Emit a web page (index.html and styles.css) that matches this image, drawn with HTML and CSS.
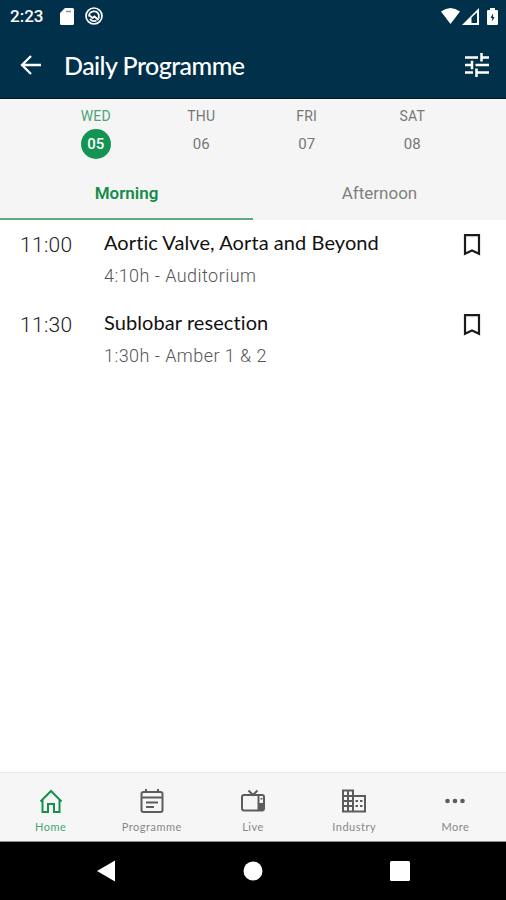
FILE: index.html
```
<!DOCTYPE html>
<html lang="en">
<head>
  <meta charset="UTF-8" />
  <meta name="viewport" content="width=device-width, initial-scale=1.0"/>
  <title>Daily Programme</title>
  <link rel="stylesheet" href="styles.css">
</head>
<body>
  <div class="status-bar">
    <span class="clock">2:23</span>
    <svg class="sd" width="14" height="17" viewBox="0 0 14 17"><path fill="#fff" d="M5 0h7.500a1.500 1.500 0 0 1 1.500 1.500v14a1.500 1.500 0 0 1-1.500 1.500h-11A1.500 1.500 0 0 1 0 15.500V5z"/><path stroke="#8295a2" stroke-width="1.500" d="M6 3.500h5"/></svg>
    <svg class="sync" width="18" height="18" viewBox="0 0 18 18" fill="none" stroke="#fff"><circle cx="9" cy="9" r="8" stroke-width="1.700"/><path stroke-width="1.800" d="M4 9.500a5 5 0 0 1 9.800-1.500v3.500M4.500 8.500l3 2.500 2-1.500 4 3.500M5 12a5 5 0 0 0 6.500 1.500"/></svg>
    <div class="signals">
      <svg width="19" height="16" viewBox="0 0 19 16"><path fill="#fff" d="M0 3.500Q9.500-3.500 19 3.500L9.500 16z"/></svg>
      <svg width="17" height="17" viewBox="0 0 17 17"><path fill="#fff" fill-rule="evenodd" d="M0 17L17 0v17zM9.500 9.500V15H15V4.500z"/></svg>
      <svg class="battery" width="11" height="17" viewBox="0 0 11 17"><path fill="#fff" d="M3 0h5v2h2a1 1 0 0 1 1 1v13a1 1 0 0 1-1 1H1a1 1 0 0 1-1-1V3a1 1 0 0 1 1-1h2z"/><path fill="#01304a" d="M6 5.500L3.500 10h1.700v3.500L7.500 9H6z"/></svg>
    </div>
  </div>

  <header class="app-bar">
    <svg width="22" height="20" viewBox="0 0 22 20" fill="none" stroke="#fff" stroke-width="2.300"><path d="M21 10H2M11 1L2 10l9 9"/></svg>
    <h1>Daily Programme</h1>
    <svg class="filter" width="24" height="24" viewBox="0 0 24 24" fill="none" stroke="#fff" stroke-width="2.500"><path d="M0 4.500h13M16.500 4.500H24M16.500 0v8.500M0 12h7M10.500 12H24M7 7.700v8.600M0 19.500h8M11.500 19.500H24M11.500 15.500V24"/></svg>
  </header>

  <div class="days">
    <div class="day active"><span>WED</span><b>05</b></div>
    <div class="day"><span>THU</span><b>06</b></div>
    <div class="day"><span>FRI</span><b>07</b></div>
    <div class="day"><span>SAT</span><b>08</b></div>
  </div>

  <div class="tabs">
    <div class="tab selected">Morning</div>
    <div class="tab">Afternoon</div>
  </div>

  <main class="sessions">
    <div class="session">
      <div class="time">11:00</div>
      <div class="info">
        <h2>Aortic Valve, Aorta and Beyond</h2>
        <p>4:10h - Auditorium</p>
      </div>
      <svg class="bookmark" width="18" height="22" viewBox="0 0 18 22"><path d="M2 1.200h14v18.500l-7-3.200-7 3.200z"/></svg>
    </div>
    <div class="session">
      <div class="time">11:30</div>
      <div class="info">
        <h2>Sublobar resection</h2>
        <p>1:30h - Amber 1 &amp; 2</p>
      </div>
      <svg class="bookmark" width="18" height="22" viewBox="0 0 18 22"><path d="M2 1.200h14v18.500l-7-3.200-7 3.200z"/></svg>
    </div>
  </main>

  <nav class="bottom-nav">
    <div class="item current">
      <svg width="26" height="26" viewBox="0 0 26 26"><path d="M2.500 13.500L13 3l10.500 10.500M4.500 11.500V24h5.500v-8h6v8h5.500V11.500"/></svg>
      <span>Home</span>
    </div>
    <div class="item">
      <svg width="26" height="26" viewBox="0 0 26 26"><rect x="2.500" y="4" width="21" height="20" rx="2"/><path d="M2.500 9.500h21M7 1v3M19 1v3M7 14.500h12M7 19h8"/></svg>
      <span>Programme</span>
    </div>
    <div class="item">
      <svg width="26" height="26" viewBox="0 0 26 26"><rect x="2" y="7" width="22" height="15.500" rx="2"/><path d="M18.500 7v15.500M8.500 2.500l4.500 4.500 4.500-4.500"/><path class="speaker" d="M19 15h5v7h-5zM20.500 10h2v1.500h-2z"/></svg>
      <span>Live</span>
    </div>
    <div class="item">
      <svg width="26" height="26" viewBox="0 0 26 26"><path d="M12 23.500H2v-21h10v21h12V8H12M7 2.500v21M2 8h10M2 13h10M2 18h10"/><path stroke-dasharray="2.500 2" d="M14.500 13H22M14.500 18H22"/></svg>
      <span>Industry</span>
    </div>
    <div class="item">
      <svg width="26" height="26" viewBox="0 0 26 26"><g class="dots"><circle cx="5.500" cy="13" r="2.300"/><circle cx="13" cy="13" r="2.300"/><circle cx="20.500" cy="13" r="2.300"/></g></svg>
      <span>More</span>
    </div>
  </nav>

  <div class="system-nav">
    <svg width="20" height="22" viewBox="0 0 20 22"><path fill="#fff" d="M19 .5v21L1 11z"/></svg>
    <svg width="20" height="20" viewBox="0 0 20 20"><circle cx="10" cy="10" r="9.500" fill="#fff"/></svg>
    <svg width="20" height="20" viewBox="0 0 20 20"><rect width="20" height="20" rx="1.500" fill="#fff"/></svg>
  </div>
</body>
</html>
```

FILE: styles.css
```
* {
  box-sizing: border-box;
}

body {
  margin: 0;
  height: 900px;
  display: flex;
  flex-direction: column;
  font-family: Roboto, sans-serif;
  background: #fff;
  overflow: hidden;
}

svg {
  display: block;
  flex: none;
}

h1, h2, p {
  margin: 0;
  font-weight: normal;
  white-space: nowrap;
}

.status-bar {
  height: 32px;
  padding: 0 8px 0 10px;
  display: flex;
  align-items: center;
  background: #01304a;
  color: #fff;
}

.clock {
  width: 50px;
  font-size: 17px;
  font-weight: 500;
}

.sync {
  margin-left: 11px;
}

.signals {
  display: flex;
  align-items: center;
  gap: 2px;
  margin-left: auto;
}

.battery {
  margin-left: 6px;
}

.app-bar {
  height: 67px;
  padding: 0 17px 1px 20px;
  display: flex;
  align-items: center;
  background: #01304a;
  border-bottom: 1px solid #06151f;
}

.app-bar h1 {
  margin-left: 22px;
  color: #fff;
  font-family: Lato, sans-serif;
  font-size: 25px;
  font-weight: 500;
  letter-spacing: -0.55px;
}

.filter {
  margin-left: auto;
}

.days {
  height: 69px;
  padding: 8px 41px 0 43px;
  display: grid;
  grid-template-columns: repeat(4, 1fr);
  background: #f5f5f5;
  color: #777;
}

.day {
  display: flex;
  flex-direction: column;
  align-items: center;
  font-size: 14px;
  line-height: 18px;
}

.day span {
  letter-spacing: 0.2px;
}

.day b {
  width: 30px;
  height: 30px;
  margin-top: 4px;
  border-radius: 50%;
  line-height: 30px;
  text-align: center;
  font-size: 15px;
  font-weight: normal;
}

.day.active {
  color: #4ea477;
}

.day.active b {
  background: #149354;
  color: #fff;
  font-weight: 500;
}

.tabs {
  height: 52px;
  display: flex;
  background: #f5f5f5;
}

.tab {
  flex: 1;
  padding-top: 14px;
  text-align: center;
  font-size: 17px;
  line-height: 22px;
  color: #808080;
}

.tab.selected {
  color: #168c4b;
  font-weight: 600;
  border-bottom: 2px solid #62aa7f;
}

.sessions {
  flex: 1;
}

.session {
  height: 80px;
  padding: 9px 25px 0 20px;
  display: flex;
  align-items: flex-start;
}

.time {
  width: 84px;
  padding-top: 3px;
  font-size: 21px;
  line-height: 26px;
  font-weight: 300;
  letter-spacing: 0.3px;
  color: #222;
}

.info h2 {
  font-family: Lato, sans-serif;
  font-size: 20px;
  line-height: 26px;
  letter-spacing: 0.08px;
  color: #111;
}

.info p {
  margin-top: 8px;
  font-size: 18px;
  line-height: 26px;
  font-weight: 300;
  letter-spacing: 0.45px;
  color: #555;
}

.bookmark {
  margin: 5px 0 0 auto;
  fill: none;
  stroke: #1a1a1a;
  stroke-width: 2.2;
}

.bottom-nav {
  height: 70px;
  display: flex;
  background: #f6f6f6;
  border-top: 1px solid #e8e8e8;
  border-bottom: 1px solid #8a8a8a;
  color: #888;
}

.item {
  flex: 1;
  padding-top: 15px;
  display: flex;
  flex-direction: column;
  align-items: center;
  font-family: Lato, sans-serif;
  font-size: 11px;
  letter-spacing: 0.5px;
}

.item span {
  margin-top: 6px;
  line-height: 14px;
}

.item svg {
  fill: none;
  stroke: #5c5c5c;
  stroke-width: 2;
}

.item .dots,
.item .speaker {
  fill: #5c5c5c;
  stroke: none;
}

.item.current {
  color: #4aa474;
}

.item.current svg {
  stroke: #168f4e;
}

.system-nav {
  height: 58px;
  padding: 0 96px;
  display: flex;
  align-items: center;
  justify-content: space-between;
  background: #000;
}
```
